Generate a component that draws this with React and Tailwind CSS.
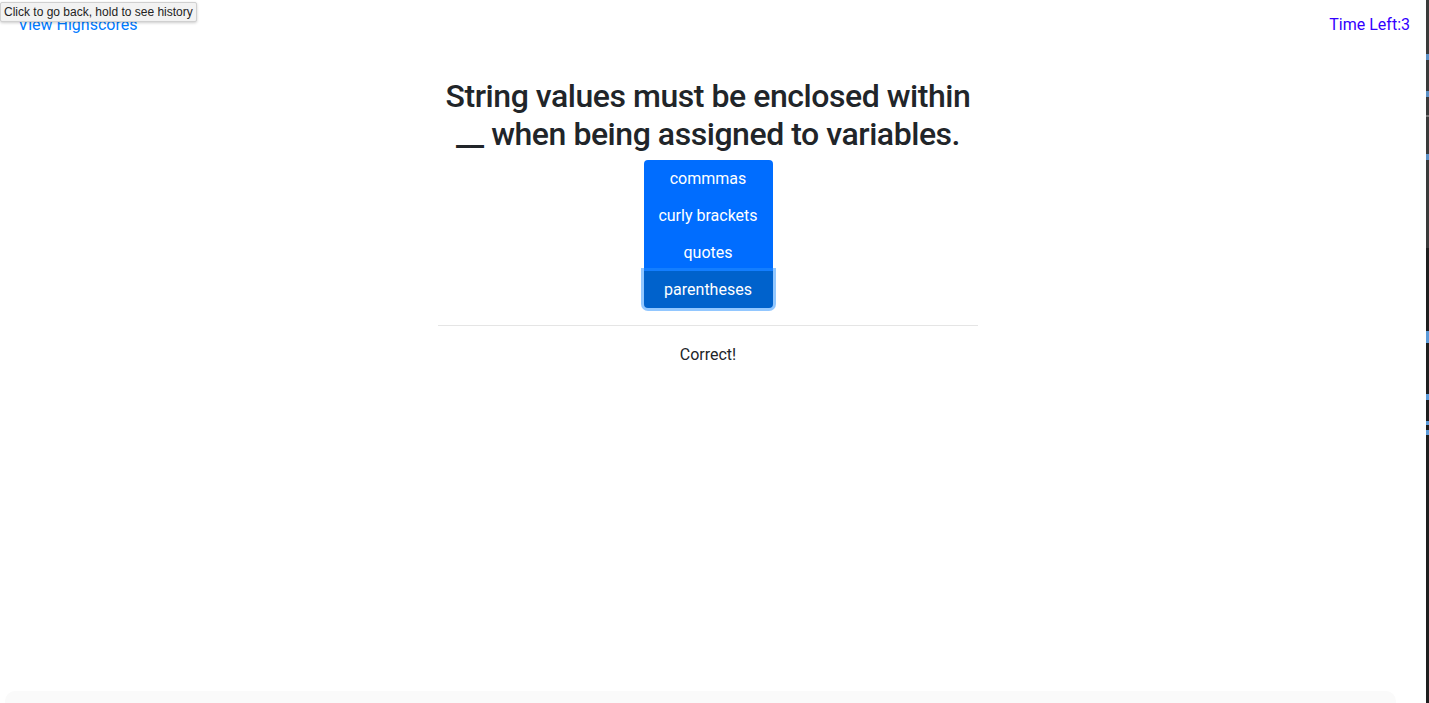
const CHOICES = ['commmas', 'curly brackets', 'quotes', 'parentheses']

// edge strip: [height, colour]
const STRIP = [
  [54, '#3a3a3a'], [6, '#5b8fc4'], [31, '#3a3a3a'], [6, '#5b8fc4'], [18, '#3a3a3a'],
  [2, '#777777'], [37, '#3a3a3a'], [6, '#5b8fc4'], [88, '#3a3a3a'], [83, '#1e1e1e'],
  [12, '#5b9ad8'], [51, '#1e1e1e'], [6, '#5b9ad8'], [21, '#1e1e1e'], [4, '#5b9ad8'],
  [5, '#1e1e1e'], [5, '#5b9ad8'],
]

export default function App() {
  const selected = 3

  return (
    <div
      className="relative flex h-[703px] w-[1429px] overflow-hidden bg-white text-[#212529]"
      style={{ fontFamily: 'Roboto, "Liberation Sans", Arial, sans-serif' }}
    >
      <div className="relative flex-1 pr-[10px]">
        <header className="flex items-center justify-between pl-[18px] pr-[6px] pt-[14px] text-base leading-[22px]">
          <a href="#" className="text-[#007bff]">View Highscores</a>
          <span className="text-[#3300ff]">Time Left:3</span>
        </header>

        <main className="mx-auto mt-[41px] flex w-[540px] flex-col items-center">
          <h2 className="text-center text-[32px] font-medium leading-[38px] tracking-[-0.45px]">
            String values must be enclosed within __ when being assigned to variables.
          </h2>

          <div className="mt-[7px] flex w-[129px] flex-col">
            {CHOICES.map((c, i) => (
              <button
                key={c}
                className={
                  i === selected
                    ? 'relative z-10 h-[37px] rounded-b-[4px] bg-[#0062cc] text-base text-white shadow-[0_0_0_3px_rgba(38,143,255,0.5)]'
                    : i === 0
                      ? 'h-[37px] rounded-t-[4px] bg-[#006dff] text-base text-white'
                      : 'h-[37px] bg-[#006dff] text-base text-white'
                }
              >
                {c}
              </button>
            ))}
          </div>

          <hr className="mt-[17px] w-full border-t border-[#e5e5e5]" />
          <p className="mt-[17px] text-base">Correct!</p>
        </main>

        <div className="absolute bottom-0 left-[5px] right-[30px] h-[12px] rounded-t-[10px] bg-[#fafafa]" />
      </div>

      <div className="flex w-[3px] flex-col bg-[#1e1e1e]">
        {STRIP.map(([h, c], i) => (
          <div key={i} style={{ height: h, backgroundColor: c }} />
        ))}
      </div>

      <div
        className="absolute left-0 top-[2px] h-[20px] rounded-[2px] border border-[#d0d0d0] bg-[#f2f2f2] px-[3px] text-[12px] leading-[18px] text-[#222] shadow-[0_1px_3px_rgba(0,0,0,0.2)]"
        style={{ fontFamily: '"Liberation Sans", Arial, sans-serif' }}
      >
        Click to go back, hold to see history
      </div>
    </div>
  )
}
